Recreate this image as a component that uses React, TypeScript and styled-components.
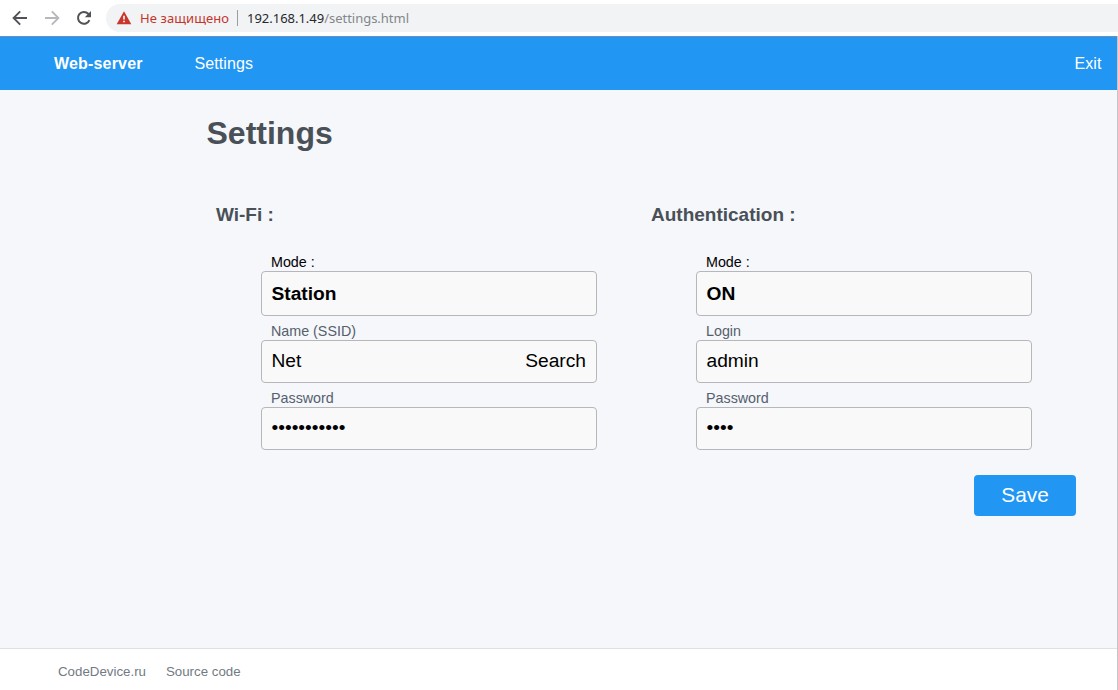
import React from "react";
import styled, { createGlobalStyle } from "styled-components";

const GlobalStyle = createGlobalStyle`
  * { box-sizing: border-box; }
  body { margin: 0; background: #fff; font-family: "Liberation Sans", Arial, sans-serif; }
`;

const Window = styled.div`
  display: flex;
  flex-direction: column;
  width: 1118px;
  height: 690px;
  overflow: hidden;
`;

const BrowserBar = styled.div`
  display: flex;
  height: 36px;
  padding: 4px 0;
  background: #fff;
`;

const NavIcons = styled.div`
  display: flex;
  align-items: center;
  gap: 16px;
  width: 106px;
  padding-left: 12px;
`;

const AddressBar = styled.div`
  display: flex;
  align-items: center;
  flex: 1;
  height: 28px;
  padding-left: 10px;
  border-radius: 14px 0 0 14px;
  background: #f1f3f4;
  font: 13px/28px "Noto Sans", "Open Sans", sans-serif;
  white-space: pre;
`;

const Warning = styled.span`
  width: 89px;
  margin-left: 8px;
  color: #c5352b;
  letter-spacing: 0.1px;
`;

const Divider = styled.span`
  width: 1px;
  height: 16px;
  margin: 0 9px 0 8px;
  background: #9a9da1;
`;

const Url = styled.span`
  color: #83878b;
  letter-spacing: -0.02px;
`;

const Host = styled.span`
  color: #26282b;
`;

const Page = styled.div`
  display: flex;
  flex-direction: column;
  flex: 1;
  border-right: 1px solid #c3c5c9;
  background: #f5f7fb;
`;

const Header = styled.header`
  display: flex;
  align-items: center;
  height: 54px;
  padding: 0 15.5px 0 54px;
  border-top: 1px solid #6793b8;
  background: #2196f3;
  color: #fff;
  font-size: 16px;
  letter-spacing: 0.1px;
`;

const Brand = styled.strong`
  width: 140.5px;
  letter-spacing: 0.18px;
`;

const Exit = styled.span`
  margin-left: auto;
`;

const Main = styled.main`
  flex: 1;
  padding: 25px 41px 0 206.5px;
`;

const Title = styled.h1`
  margin: 0;
  color: #495057;
  font-size: 32px;
  line-height: 37px;
`;

const Columns = styled.div`
  display: flex;
  padding: 52px 0 0 9.5px;
`;

const Section = styled.section`
  flex: none;
  width: 435px;
`;

const SectionTitle = styled.h3`
  margin: 0 0 28px;
  color: #495057;
  font-size: 19px;
  line-height: 22px;
`;

const Fields = styled.div`
  display: flex;
  flex-direction: column;
  gap: 7px;
  width: 336px;
  margin-left: 45px;
`;

const Label = styled.div<{ $dark?: boolean }>`
  height: 17px;
  padding-left: 10px;
  color: ${(p) => (p.$dark ? "#000" : "#56606c")};
  font-size: 14.3px;
  line-height: 16px;
`;

const Control = styled.div<{ $select?: boolean }>`
  display: flex;
  justify-content: space-between;
  height: ${(p) => (p.$select ? 45 : 43)}px;
  padding: 0 10px 0 9.5px;
  border: 1px solid #b5b7ba;
  border-radius: 4px;
  background: #f9f9f9;
  color: #000;
  font-size: 19.2px;
  font-weight: ${(p) => (p.$select ? 700 : 400)};
  line-height: ${(p) => (p.$select ? 43 : 40)}px;
`;

const Actions = styled.div`
  display: flex;
  justify-content: flex-end;
  padding-top: 25px;
`;

const SaveButton = styled.button`
  width: 102px;
  height: 41px;
  padding: 0 0 2px;
  border: 0;
  border-radius: 4px;
  background: #2196f3;
  color: #fff;
  font: 20.8px/38px "Liberation Sans", Arial, sans-serif;
`;

const Footer = styled.footer`
  display: flex;
  gap: 20px;
  height: 42px;
  padding-left: 58px;
  border-top: 1px solid #dfe1e5;
  background: #fff;
  color: #727a82;
  font-size: 13.3px;
  line-height: 45px;
`;

function ArrowIcon({ forward = false }: { forward?: boolean }) {
  return (
    <svg width="16" height="16" viewBox="0 0 16 16" fill="none" stroke={forward ? "#b6b8bb" : "#4f5358"} strokeWidth="1.9">
      <path d={forward ? "M1 8H14M7.8 1.4L14.4 8L7.8 14.6" : "M15 8H2M8.2 1.4L1.6 8L8.2 14.6"} />
    </svg>
  );
}

function ReloadIcon() {
  return (
    <svg width="16" height="16" viewBox="0 0 16 16">
      <path d="M13.4 10.1A5.9 5.9 0 1 1 12.2 3.8L13.5 5.1" fill="none" stroke="#4f5358" strokeWidth="2" />
      <path d="M15 1V7.2H8.8Z" fill="#4f5358" />
    </svg>
  );
}

function WarningIcon() {
  return (
    <svg width="16" height="16" viewBox="0 0 16 16">
      <path d="M8 1.3L15.3 14.2H.7Z" fill="#c9372c" />
      <path d="M7.2 5.8H8.8V9.5H7.2ZM7.2 10.8H8.8V12.3H7.2Z" fill="#fff" />
    </svg>
  );
}

interface FieldProps {
  label: string;
  value: string;
  select?: boolean;
  action?: string;
}

function Field({ label, value, select, action }: FieldProps) {
  return (
    <div>
      <Label $dark={select}>{label}</Label>
      <Control $select={select}>
        <span>{value}</span>
        {action && <span>{action}</span>}
      </Control>
    </div>
  );
}

export default function App() {
  return (
    <Window>
      <GlobalStyle />
      <BrowserBar>
        <NavIcons>
          <ArrowIcon />
          <ArrowIcon forward />
          <ReloadIcon />
        </NavIcons>
        <AddressBar>
          <WarningIcon />
          <Warning>Не защищено</Warning>
          <Divider />
          <Url><Host>192.168.1.49</Host>/settings.html</Url>
        </AddressBar>
      </BrowserBar>
      <Page>
        <Header>
          <Brand>Web-server</Brand>
          <span>Settings</span>
          <Exit>Exit</Exit>
        </Header>
        <Main>
          <Title>Settings</Title>
          <Columns>
            <Section>
              <SectionTitle>Wi-Fi :</SectionTitle>
              <Fields>
                <Field label="Mode :" value="Station" select />
                <Field label="Name (SSID)" value="Net" action="Search" />
                <Field label="Password" value="•••••••••••" />
              </Fields>
            </Section>
            <Section>
              <SectionTitle>Authentication :</SectionTitle>
              <Fields>
                <Field label="Mode :" value="ON" select />
                <Field label="Login" value="admin" />
                <Field label="Password" value="••••" />
              </Fields>
            </Section>
          </Columns>
          <Actions>
            <SaveButton>Save</SaveButton>
          </Actions>
        </Main>
        <Footer>
          <span>CodeDevice.ru</span>
          <span>Source code</span>
        </Footer>
      </Page>
    </Window>
  );
}
